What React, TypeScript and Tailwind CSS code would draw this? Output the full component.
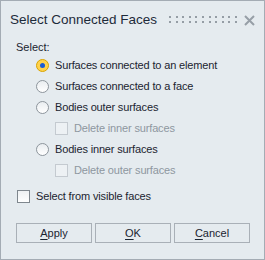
import React from "react";

const font = { fontFamily: '"Liberation Sans", Arial, sans-serif' };

function Grip() {
	const cols = Array.from({ length: 11 }, (_, i) => Math.round(i * 6.6));
	return (
		<svg width="68" height="10" viewBox="0 0 68 10" className="block">
			{cols.map((x) => (
				<g key={x} fill="#959da5">
					<rect x={x} y={1} width={2} height={2} />
					<rect x={x} y={6} width={2} height={2} />
				</g>
			))}
		</svg>
	);
}

function CloseIcon() {
	return (
		<svg width="11" height="11" viewBox="0 0 11 11" className="block">
			<path d="M1 1 L10 10 M10 1 L1 10" stroke="#979fa7" strokeWidth="2" />
		</svg>
	);
}

function Radio({ checked, label }: { checked?: boolean; label: string }) {
	return (
		<div className="flex items-center h-[21px] pl-[35px]">
			{checked ? (
				<span className="w-[13px] h-[13px] rounded-full border border-[#d9a400] bg-[#ffd24d] flex items-center justify-center">
					<span className="w-[5px] h-[5px] rounded-full bg-[#1a5bd6]" />
				</span>
			) : (
				<span className="w-[13px] h-[13px] rounded-full border border-[#8d959c] bg-gradient-to-b from-[#e9edf0] to-[#ffffff]" />
			)}
			<span className="ml-[6px] text-[11px] tracking-[-0.15px] text-[#1b2430]">{label}</span>
		</div>
	);
}

function DisabledCheck({ label }: { label: string }) {
	return (
		<div className="flex items-center h-[21px] pl-[54px]">
			<span className="w-[13px] h-[13px] border border-[#c4cad0] bg-[#edf1f4]" />
			<span className="ml-[6px] text-[11px] tracking-[-0.15px] text-[#8e979f]">{label}</span>
		</div>
	);
}

function Btn({ k, rest }: { k: string; rest: string }) {
	return (
		<button className="w-[76px] h-[20px] border border-[#a9b0b7] bg-[#e5ebef] text-[11px] text-[#1b2430] flex items-center justify-center">
			<span className="underline underline-offset-2">{k}</span>
			{rest}
		</button>
	);
}

export default function App() {
	return (
		<div
			className="w-[265px] h-[260px] border border-[#a4acb4] bg-[#e5ebef] flex flex-col"
			style={font}
		>
			<div className="flex items-center h-[38px] pl-[9px] pr-[9px]">
				<span className="text-[13.5px] text-[#1d2a3a]">Select Connected Faces</span>
				<div className="ml-auto flex items-center gap-[7px]">
					<Grip />
					<CloseIcon />
				</div>
			</div>
			<div className="pl-[15px] text-[11px] text-[#1b2430] h-[16px] flex items-center">Select:</div>
			<div className="flex flex-col">
				<Radio checked label="Surfaces connected to an element" />
				<Radio label="Surfaces connected to a face" />
				<Radio label="Bodies outer surfaces" />
				<DisabledCheck label="Delete inner surfaces" />
				<Radio label="Bodies inner surfaces" />
				<DisabledCheck label="Delete outer surfaces" />
			</div>
			<div className="flex items-center pl-[16px] mt-[5px] h-[21px]">
				<span className="w-[13px] h-[13px] border border-[#7f878e] bg-gradient-to-b from-[#eef1f3] to-[#ffffff]" />
				<span className="ml-[6px] text-[11px] tracking-[-0.15px] text-[#1b2430]">Select from visible faces</span>
			</div>
			<div className="flex gap-[3px] pl-[15px] mt-[16px]">
				<Btn k="A" rest="pply" />
				<Btn k="O" rest="K" />
				<Btn k="C" rest="ancel" />
			</div>
		</div>
	);
}
